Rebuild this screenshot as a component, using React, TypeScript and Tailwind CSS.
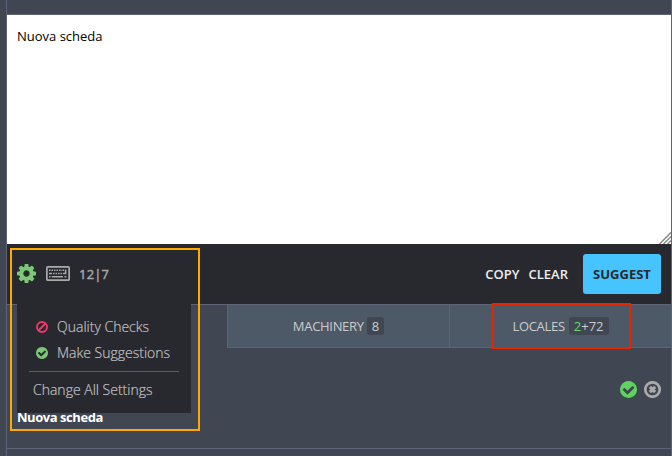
import React from "react";

const GearIcon = () => (
  <svg className="-mt-px block h-[19px] w-[19px]" viewBox="0 128 1536 1536" fill="#7bc876">
    <path d="M1024 896q0-106-75-181t-181-75-181 75-75 181 75 181 181 75 181-75 75-181zm512-109v222q0 12-8 23t-20 13l-185 28q-19 54-39 91 35 50 107 138 10 12 10 25t-9 23q-27 37-99 108t-94 71q-12 0-26-9l-138-108q-44 23-91 38-16 136-29 186-7 28-36 28h-222q-14 0-24.500-8.500t-11.500-21.500l-28-184q-49-16-90-37l-141 107q-10 9-25 9-14 0-25-11-126-114-165-168-7-10-7-23 0-12 8-23 15-21 51-66.500t54-70.500q-27-50-41-99l-183-27q-13-2-21-12.500t-8-23.500v-222q0-12 8-23t19-13l186-28q14-46 39-92-40-57-107-138-10-12-10-24 0-10 9-23 26-36 98.500-107.500t94.500-71.500q13 0 26 10l138 107q44-23 91-38 16-136 29-186 7-28 36-28h222q14 0 24.500 8.500t11.500 21.500l28 184q49 16 90 37l142-107q9-9 24-9 13 0 25 10 129 119 165 170 7 8 7 22 0 12-8 23-15 21-51 66.500t-54 70.500q26 50 41 98l183 28q13 2 21 12.500t8 23.500z" />
  </svg>
);

const KeyboardIcon = () => (
  <svg className="-mt-px ml-[10px] block h-[15px] w-6" viewBox="0 0 24 15" fill="none" stroke="#aaa">
    <rect x="0.85" y="0.85" width="22.3" height="13.3" rx="1" strokeWidth="1.700" />
    <path d="M3 4.200h13" strokeWidth="1.500" strokeDasharray="1.500 1" />
    <path d="M3 7.500h3M7 7.500h1.500M9.500 7.500h1.500M12 7.500h1.500M14.500 7.500h1.500M17 7.500h3.300M19.600 3.400v4.800M17.300 3.500v1.400" strokeWidth="1.500" />
    <path d="M3 10.800h1.500M5.700 10.800h11.300M18.500 10.800h1.800" strokeWidth="1.500" />
  </svg>
);

const BanIcon = () => (
  <svg className="block h-3 w-3" viewBox="0 0 12 12" fill="none" stroke="#f5366b" strokeWidth="1.900">
    <circle cx="6" cy="6" r="5" />
    <path d="M2.500 9.500l7-7" />
  </svg>
);

const CheckIcon = ({ className, fill }: { className: string; fill: string }) => (
  <svg className={className} viewBox="0 128 1536 1536" fill={fill}>
    <path d="M1284 734q0-28-18-46l-91-90q-19-19-45-19t-45 19l-408 407-226-226q-19-19-45-19t-45 19l-91 90q-18 18-18 46 0 27 18 45l362 362q19 19 45 19 27 0 46-19l543-543q18-18 18-45zm252 162q0 209-103 385.500t-279.500 279.500-385.500 103-385.500-103-279.500-279.500-103-385.500 103-385.500 279.500-279.500 385.500-103 385.500 103 279.500 279.500 103 385.500z" />
  </svg>
);

const RejectIcon = () => (
  <svg className="block h-[17px] w-[17px]" viewBox="0 0 17 17" fill="none" stroke="#aaa">
    <circle cx="8.5" cy="8.500" r="7.200" strokeWidth="2.700" />
    <path d="M5.900 5.900l5.200 5.200M11.100 5.900l-5.200 5.200" strokeWidth="3.100" />
  </svg>
);

const SettingsMenu = () => (
  <div className="absolute left-[10px] top-[-1px] h-[109px] w-[174px] bg-[#28292f] pt-[10px] text-[14px] font-light leading-[26px] text-[#c0c0c0] [-webkit-text-stroke:0.200px_#c0c0c0]">
    <div className="flex h-[26px] items-center pl-[19px]">
      <BanIcon />
      <span className="ml-[9px] whitespace-nowrap">Quality Checks</span>
    </div>
    <div className="flex h-[26px] items-center pl-[19px]">
      <CheckIcon className="block h-3 w-3" fill="#7bc876" />
      <span className="ml-[9px] whitespace-nowrap">Make Suggestions</span>
    </div>
    <div className="mx-3 mt-[5px] border-t border-[#5b5d64]" />
    <div className="mt-[5px] pl-4">Change All Settings</div>
  </div>
);

export default function App() {
  return (
    <div className="relative flex h-[456px] w-[672px] overflow-hidden bg-[#414752] font-['Open_Sans',sans-serif] text-[13px]">
      <main className="ml-[6px] flex w-[666px] flex-col border-x border-[#5e6475]">
        <div className="h-[15px] border-b border-[#5e6475]" />
        <div className="flex h-[229px] justify-between bg-white">
          <p className="pl-[10px] pt-[11px] leading-5 text-black">Nuova scheda</p>
          <svg className="mt-auto h-3 w-3" viewBox="0 0 12 12" stroke="#888" strokeWidth="1.500">
            <path d="M0.500 12L12 0.500M4.500 12L12 4.500M8.500 12L12 8.500" />
          </svg>
        </div>
        <div className="flex h-[60px] items-center bg-[#28292f] px-[10px]">
          <GearIcon />
          <KeyboardIcon />
          <span className="ml-[9px] mt-[2px] tracking-[0.200px] text-[#aaa] [-webkit-text-stroke:0.400px_#aaa]">12|7</span>
          <span className="ml-auto mt-[2px] font-semibold text-[#eee]">COPY</span>
          <span className="ml-[9px] mr-[15px] mt-[2px] font-semibold text-[#eee]">CLEAR</span>
          <button className="h-10 w-[78px] rounded-[3px] bg-[#45c4ff] pt-[2px] text-[13px] font-bold text-[#28292f]">SUGGEST</button>
        </div>
        <nav className="relative flex h-[44px] border-t border-[#5e6475]">
          <div className="w-[220px]" />
          <div className="flex w-[223px] items-center justify-center border-x border-b border-[#5e6475] bg-[#4d5967] text-[#ccc]">
            <span className="mt-[2px] tracking-[-0.300px]">MACHINERY</span>
            <span className="ml-[3px] flex h-[18px] items-center rounded-[3px] bg-[#414752] px-[5px] pt-px">8</span>
          </div>
          <div className="flex flex-1 items-center justify-center border-b border-[#5e6475] bg-[#4d5967] text-[#ccc]">
            <span className="mt-[2px] tracking-[-0.300px]">LOCALES</span>
            <span className="ml-[4px] flex h-[18px] items-center rounded-[3px] bg-[#414752] px-[5px] pt-px">
              <span className="text-[#6bd66b]">2</span>+72
            </span>
          </div>
          <SettingsMenu />
        </nav>
        <section className="flex h-[101px] justify-between border-b border-[#5e6475] px-[10px]">
          <p className="pt-[59px] font-bold leading-5 tracking-[-0.450px] text-white">Nuova scheda</p>
          <div className="flex gap-[7px] pt-[33px]">
            <CheckIcon className="block h-[17px] w-[17px]" fill="#5fd35f" />
            <RejectIcon />
          </div>
        </section>
      </main>
      <div className="absolute left-[10px] top-[248px] h-[183px] w-[190px] border-2 border-[#ffa800]" />
      <div className="absolute left-[492px] top-[303px] h-[46px] w-[139px] border-2 border-[#e52600]" />
    </div>
  );
}
